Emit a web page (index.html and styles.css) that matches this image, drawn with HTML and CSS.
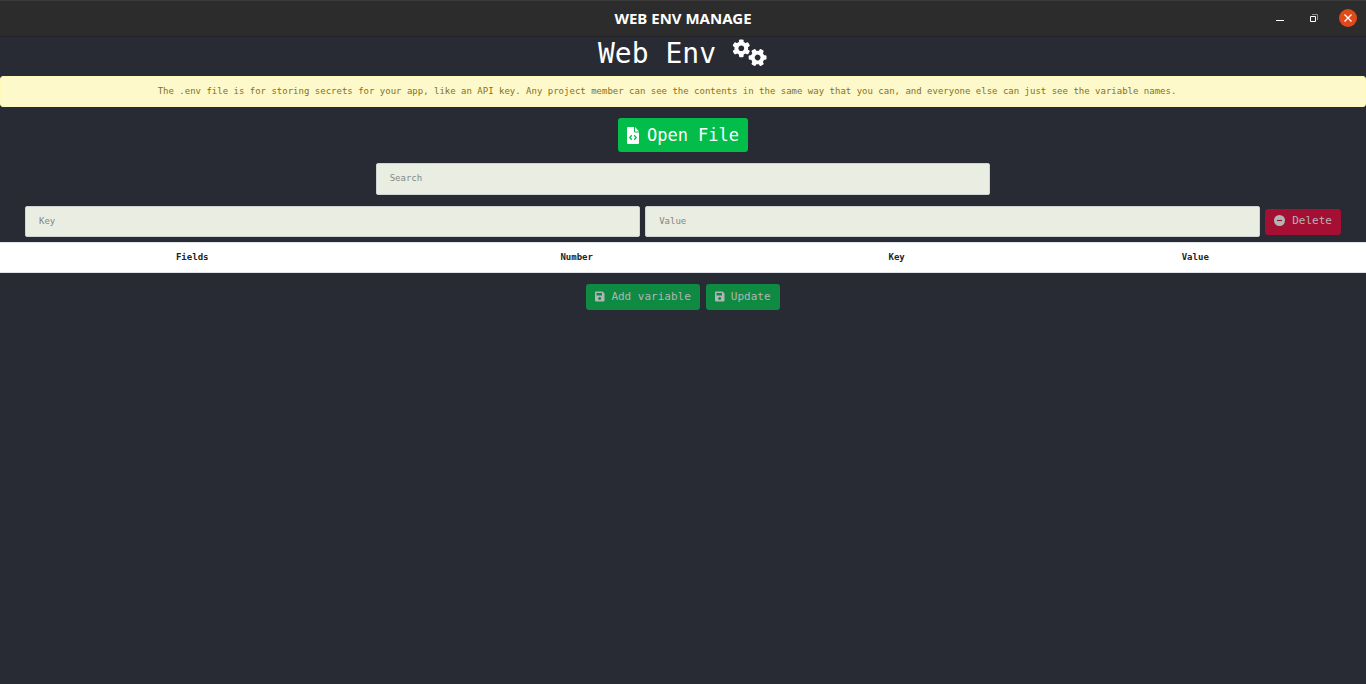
FILE: index.html
```
<!DOCTYPE html>
<html lang="en">
<head>
<meta charset="utf-8">
<title>Web Env Manage</title>
<link rel="stylesheet" href="styles.css">
</head>
<body>
<header class="titlebar">
  <span class="titlebar-text">WEB ENV MANAGE</span>
  <div class="window-controls">
    <button class="control" type="button" aria-label="Minimize"><svg width="10" height="10" viewBox="0 0 10 10"><path d="M1 7h8v1H1z" fill="#fff"/></svg></button>
    <button class="control" type="button" aria-label="Restore"><svg width="8" height="8" viewBox="0 0 8 8"><path d="M.5 2.500h5v5h-5z" fill="none" stroke="#fff"/><path d="M2 .5h5.500V6" fill="none" stroke="#8c8c8c"/></svg></button>
    <button class="control control-close" type="button" aria-label="Close"><svg width="8" height="8" viewBox="0 0 8 8"><path d="M.5.5l7 7M7.500.5l-7 7" stroke="#fff" stroke-width="1.300"/></svg></button>
  </div>
</header>
<main>
  <h1 class="heading">Web Env
    <svg class="gears" width="36" height="28" viewBox="0 0 36 28" aria-hidden="true">
      <defs>
        <mask id="hole" maskUnits="userSpaceOnUse" x="-10" y="-10" width="20" height="20"><circle r="10" fill="#fff"/><circle r="2.800" fill="#000"/></mask>
        <g id="gear" mask="url(#hole)" fill="#fff">
          <circle r="6.800"/>
          <g id="teeth"><rect x="-2.300" y="-8.900" width="4.600" height="17.800" rx="1.200"/></g>
          <use href="#teeth" transform="rotate(60)"/>
          <use href="#teeth" transform="rotate(120)"/>
        </g>
      </defs>
      <use href="#gear" transform="translate(9.300 9.300)"/>
      <use href="#gear" transform="translate(25.600 18.500) rotate(30)"/>
    </svg>
  </h1>
  <p class="notice">The .env file is for storing secrets for your app, like an API key. Any project member can see the contents in the same way that you can, and everyone else can just see the variable names.</p>
  <div class="open-row">
    <button class="btn btn-green btn-large" type="button"><svg width="12" height="17" viewBox="0 0 12 17" aria-hidden="true"><path fill="#fff" fill-rule="evenodd" d="M1 0H7v4.500q0 1 1 1h4v10.500q0 1-1 1h-10Q0 17 0 16v-15Q0 0 1 0zM8 0l4 4.500H8z"/><path d="M4.800 8.300L2.800 10.500l2 2.200M7.200 8.300l2 2.200-2 2.200" fill="none" stroke="#02bd4a" stroke-width="1.300"/></svg>Open File</button>
  </div>
  <div class="search-row"><input class="field search" type="text" placeholder="Search" aria-label="Search"></div>
  <div class="variable-row">
    <input class="field" type="text" placeholder="Key" aria-label="Key">
    <input class="field" type="text" placeholder="Value" aria-label="Value">
    <button class="btn btn-red" type="button" disabled><svg width="12" height="11" viewBox="0 0 12 11" aria-hidden="true"><circle cx="5.500" cy="5.500" r="5.500" fill="currentColor"/><path d="M3 5.500h5" stroke="#a60f34" stroke-width="1.200"/></svg>Delete</button>
  </div>
  <table class="variables">
    <thead><tr><th>Fields</th><th>Number</th><th>Key</th><th>Value</th></tr></thead>
  </table>
  <div class="actions">
    <button class="btn btn-green" type="button" disabled><svg class="save" width="10" height="11" viewBox="0 0 10 11" aria-hidden="true"><path fill="currentColor" fill-rule="evenodd" d="M1 .5h6.500L9.500 2.500v7q0 1-1 1h-7.500Q0 10.500 0 9.500V1.500Q0 .5 1 .5zM1.500 2v2.500h5.500V2zM4.700 5.900a1.500 1.500 0 1 0 .01 0z"/></svg>Add variable</button>
    <button class="btn btn-green" type="button" disabled><svg class="save" width="10" height="11" viewBox="0 0 10 11" aria-hidden="true"><path fill="currentColor" fill-rule="evenodd" d="M1 .5h6.500L9.500 2.500v7q0 1-1 1h-7.500Q0 10.500 0 9.500V1.500Q0 .5 1 .5zM1.500 2v2.500h5.500V2zM4.700 5.900a1.500 1.500 0 1 0 .01 0z"/></svg>Update</button>
  </div>
</main>
</body>
</html>
```
FILE: styles.css
```
* { box-sizing: border-box; }
body {
  margin: 0;
  min-height: 100vh;
  background: #282b34;
  color: #fff;
  font-family: "DejaVu Sans Mono", monospace;
  font-size: 9px;
}
.titlebar {
  display: grid;
  grid-template-columns: 1fr auto 1fr;
  align-items: center;
  height: 37px;
  padding-bottom: 2px;
  background: #2c2c2c;
  border-top: 1px solid #3c3c3c;
  border-bottom: 1px solid #232323;
  font-family: "Noto Sans", "Open Sans", sans-serif;
}
.titlebar-text { grid-column: 2; font-size: 15px; line-height: 20px; font-weight: 700; }
.window-controls { display: flex; justify-content: flex-end; gap: 16px; padding-right: 9px; }
.control {
  display: grid;
  place-items: center;
  width: 18px;
  height: 18px;
  padding: 0;
  border: 0;
  border-radius: 50%;
  background: none;
}
.control-close { background: #e2491a; }
.heading {
  display: flex;
  align-items: center;
  justify-content: center;
  gap: 16px;
  height: 39px;
  margin: 0;
  padding-bottom: 6px;
  font-size: 28px;
  font-weight: 400;
  line-height: 34px;
}
.gears { margin-bottom: 2px; }
.notice {
  margin: 0;
  padding: 8px 44px 8px 12px;
  border: 1px solid #fff8b8;
  border-radius: 3px;
  background: #fef9cb;
  color: #857118;
  line-height: 13px;
  text-align: center;
}
.open-row, .search-row { display: flex; justify-content: center; margin-top: 11px; }
.btn {
  display: flex;
  align-items: center;
  justify-content: center;
  gap: 6px;
  height: 26px;
  padding: 0 9px 2px;
  border: 0;
  border-radius: 3px;
  color: #fff;
  font-family: inherit;
  font-size: 11px;
  white-space: nowrap;
}
.btn:disabled { color: #b2b5b4; }
.btn-green { background: #02bd4a; }
.btn-green:disabled { background: #0e8a42; }
.btn-red:disabled { background: #a60f34; }
.btn-large { height: 34px; gap: 8px; padding-bottom: 0; font-size: 17px; }
.field {
  flex: 1;
  min-width: 0;
  height: 31px;
  padding: 0 13px 2px;
  border: 1px solid #ced4d1;
  border-radius: 2px;
  background: #e9ede2;
  color: #333;
  font-family: inherit;
  font-size: 9px;
}
.field::placeholder { color: #848782; opacity: 1; }
.search { flex: 0 0 45%; height: 32px; }
.variable-row {
  display: flex;
  align-items: center;
  gap: 5px;
  margin-top: 11px;
  padding: 0 25px;
}
.variables {
  width: 100%;
  margin-top: 5px;
  border-collapse: collapse;
  background: #fff;
  color: #212529;
}
.variables th {
  padding: 8px;
  border-top: 1px solid #dee2e6;
  border-bottom: 1px solid #dee2e6;
  line-height: 13px;
  text-align: center;
}
.actions { display: flex; justify-content: center; gap: 6px; margin-top: 11px; }
```
